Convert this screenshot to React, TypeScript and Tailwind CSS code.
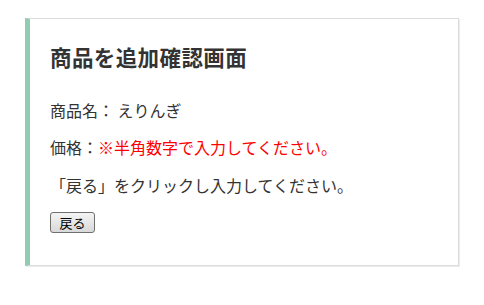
import React from "react";

export default function App(): JSX.Element {
  return (
    <div
      className="min-h-screen bg-white text-[#333]"
      style={{ fontFamily: '"Noto Sans CJK JP", "Noto Sans", sans-serif' }}
    >
      <div className="pl-[25px] pt-[18px] w-[459px]">
        <section className="border border-[#dcdcdc] border-l-[5px] border-l-[#8fccb0] shadow-[1px_1px_0_#ececec] bg-white pl-[20px] pt-[23px] pb-[32px]">
          <h1 className="text-[21.5px] font-bold leading-[30px] tracking-[0.4px]">商品を追加確認画面</h1>
          <p className="mt-[26px] text-[16px] leading-[24px]">商品名： えりんぎ</p>
          <p className="mt-[13px] text-[16px] leading-[24px]">
            価格：<span className="text-[#ff0000]">※半角数字で入力してください。</span>
          </p>
          <p className="mt-[14px] text-[16px] leading-[24px]">「戻る」をクリックし入力してください。</p>
          <button className="mt-[15px] w-[45px] h-[21px] border border-[#707070] rounded-[3px] bg-gradient-to-b from-[#f4f4f4] to-[#d9d9d9] text-[13px] leading-none text-black">
            戻る
          </button>
        </section>
      </div>
    </div>
  );
}
